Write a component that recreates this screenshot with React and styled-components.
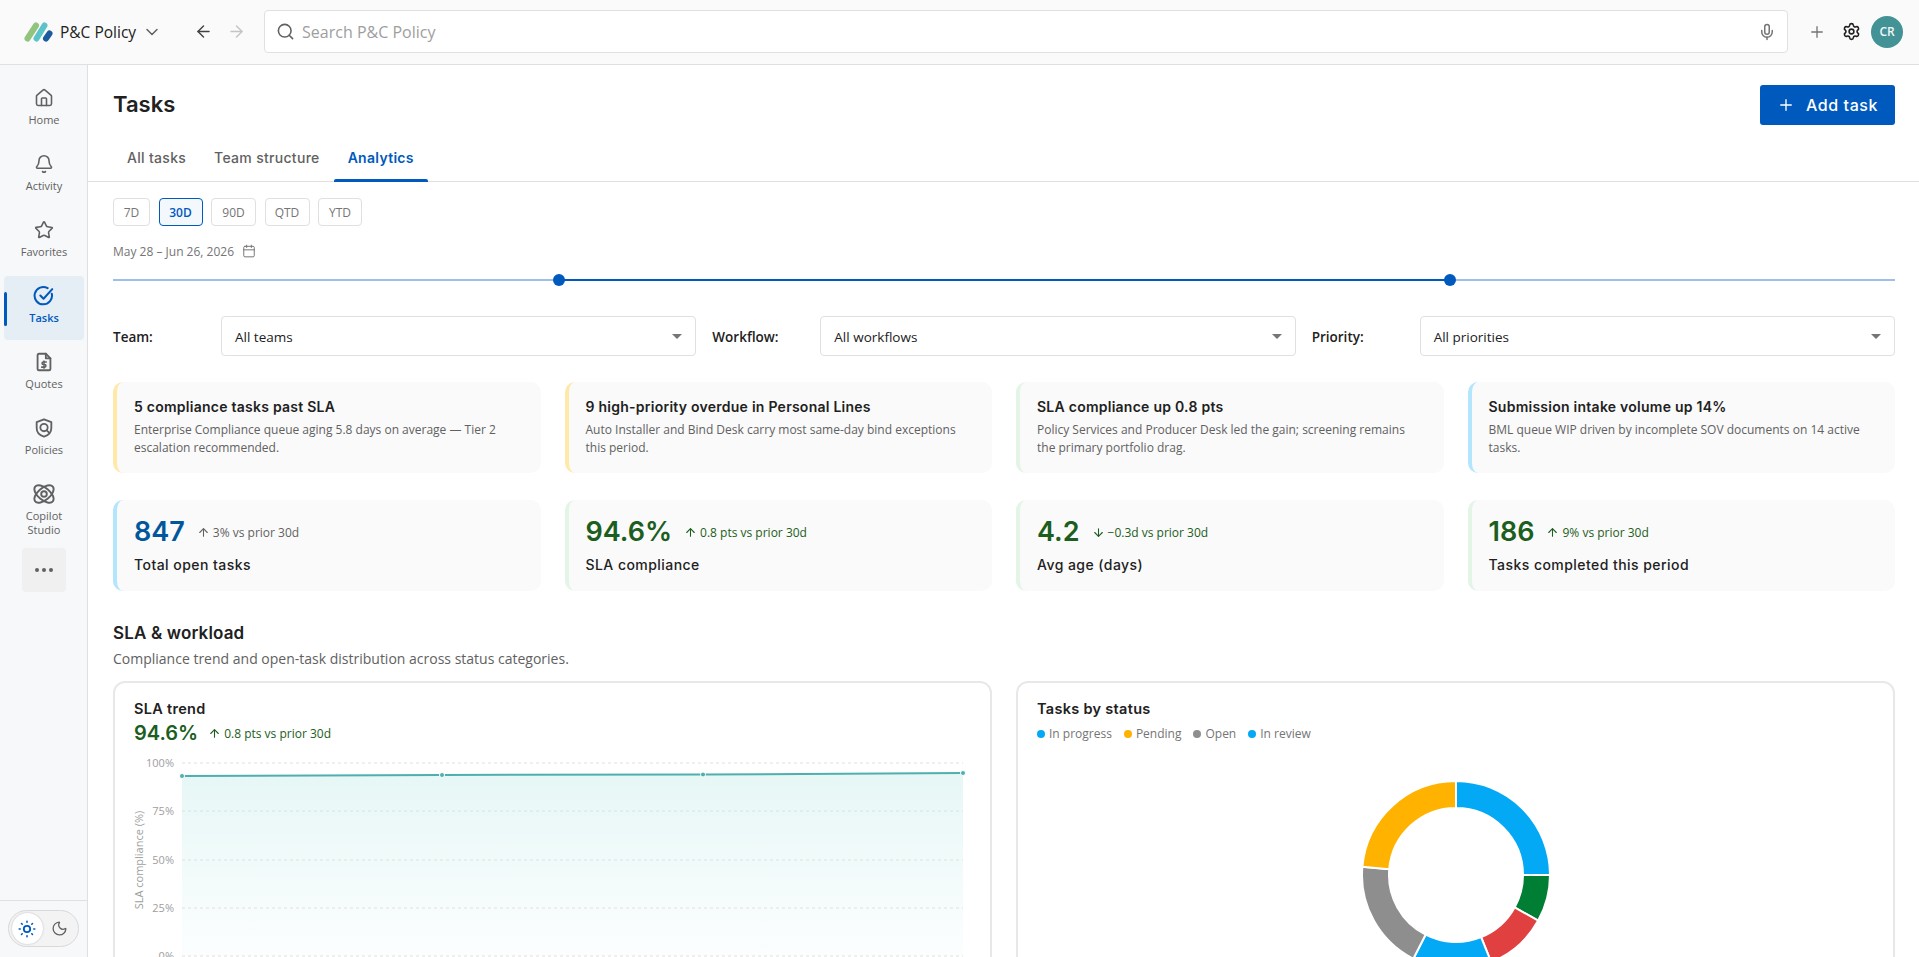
import React from 'react'
import styled, { createGlobalStyle } from 'styled-components'
import {
  House,
  Bell,
  Star,
  Search,
  Mic,
  Plus,
  Settings,
  ArrowLeft,
  ArrowRight,
  ArrowUp,
  ArrowDown,
  ChevronDown,
  Calendar,
  Moon,
} from 'lucide-react'

const headFont = `Inter, 'Liberation Sans', sans-serif`
const bodyFont = `'Open Sans', 'Noto Sans', sans-serif`
const primary = '#0059bd'
const lineColor = '#e0e0e0'
const greenText = '#1b5e20'

const GlobalStyle = createGlobalStyle`
  html, body { margin: 0; padding: 0; height: 100%; overflow: hidden; background: #fff; }
  body { font-family: ${bodyFont}; color: #212121; }
  * { box-sizing: border-box; }
`

const Shell = styled.div`
  height: 957px;
  display: flex;
  flex-direction: column;
  overflow: hidden;
`

const TopBar = styled.header`
  flex: 0 0 65px;
  display: flex;
  align-items: center;
  padding: 0 15px 1px 24px;
  background: #fafafa;
  border-bottom: 1px solid ${lineColor};
`

const AppName = styled.span`
  font-size: 15.5px;
  font-weight: 500;
  margin-left: 7px;
  color: #212121;
  white-space: nowrap;
`

const AppChevron = styled.span`
  display: flex;
  margin-left: 6px;
  color: #616161;
`

const NavArrow = styled.span`
  display: flex;
  margin-left: ${(p) => p.$gap}px;
  color: ${(p) => (p.$disabled ? '#c4c4c4' : '#424242')};
`

const SearchBox = styled.div`
  width: 1524px;
  height: 43px;
  margin-left: 18px;
  padding: 0 11px 0 11px;
  display: flex;
  align-items: center;
  background: #fff;
  border: 1px solid ${lineColor};
  border-radius: 4px;
  color: #616161;
`

const SearchText = styled.span`
  flex: 1;
  margin-left: 7px;
  font-size: 16px;
  color: #9e9e9e;
`

const TopAction = styled.span`
  display: flex;
  margin-left: ${(p) => p.$gap}px;
  color: ${(p) => p.$color};
`

const Avatar = styled.span`
  width: 32px;
  height: 32px;
  margin-left: 10px;
  display: flex;
  align-items: center;
  justify-content: center;
  border-radius: 50%;
  background: #429296;
  color: #f1f8f8;
  font-size: 12px;
  font-weight: 600;
`

const Body = styled.div`
  flex: 1;
  min-height: 0;
  display: flex;
`

const SideBar = styled.nav`
  flex: 0 0 88px;
  display: flex;
  flex-direction: column;
  background: #f7f8fa;
  border-right: 1px solid ${lineColor};
`

const NavList = styled.div`
  flex: 1;
  padding: 13px 3px 0 4px;
  display: flex;
  flex-direction: column;
  align-items: center;
  gap: 2px;
`

const NavItem = styled.a`
  position: relative;
  flex: 0 0 64px;
  width: 100%;
  padding-top: 9px;
  display: flex;
  flex-direction: column;
  align-items: center;
  gap: 4px;
  border-radius: 4px;
  font-size: 11px;
  line-height: 14px;
  text-align: center;
  color: ${(p) => (p.$active ? primary : '#616161')};
  font-weight: ${(p) => (p.$active ? 600 : 400)};
  background: ${(p) => (p.$active ? '#e5edf5' : 'transparent')};
`

const NavIcon = styled.span`
  height: 22px;
  display: flex;
  align-items: center;
  justify-content: center;
`

const NavLabel = styled.span`
  max-width: 60px;
`

const ActiveMark = styled.span`
  position: absolute;
  left: 0;
  top: 16px;
  width: 3px;
  height: 34px;
  border-radius: 2px;
  background: ${primary};
`

const MoreTile = styled.div`
  flex: 0 0 44px;
  width: 44px;
  margin-top: 8px;
  display: flex;
  align-items: center;
  justify-content: center;
  gap: 2.5px;
  border-radius: 4px;
  background: #f0f0f0;
`

const MoreDot = styled.span`
  width: 4.5px;
  height: 4.5px;
  border-radius: 50%;
  background: #616161;
`

const ThemeArea = styled.div`
  flex: 0 0 57px;
  padding: 9px 8px;
  border-top: 1px solid ${lineColor};
`

const ThemeToggle = styled.div`
  width: 71px;
  height: 37px;
  padding: 2px 3px;
  display: flex;
  align-items: center;
  border: 1px solid #d9d9d9;
  border-radius: 19px;
  background: #f3f3f3;
  color: #616161;
`

const ThemeKnob = styled.span`
  width: 31px;
  height: 31px;
  display: flex;
  align-items: center;
  justify-content: center;
  border-radius: 50%;
  background: ${(p) => (p.$on ? '#fff' : 'transparent')};
  box-shadow: ${(p) => (p.$on ? '0 0 2px rgba(0,0,0,.25)' : 'none')};
  margin-right: ${(p) => (p.$on ? '2px' : '0')};
`

const Main = styled.main`
  flex: 1;
  min-width: 0;
  overflow: hidden;
`

const TitleRow = styled.div`
  height: 60px;
  padding: 20px 24px 0 25px;
  display: flex;
  justify-content: space-between;
  align-items: flex-start;
`

const PageTitle = styled.h1`
  margin: 0;
  font-family: ${headFont};
  font-size: 22px;
  line-height: 38px;
  font-weight: 600;
  color: #212121;
`

const AddButton = styled.button`
  width: 135px;
  height: 40px;
  display: flex;
  align-items: center;
  justify-content: center;
  gap: 11px;
  border: 0;
  border-radius: 3px;
  background: ${primary};
  color: #fff;
  font-family: ${headFont};
  font-size: 16px;
  letter-spacing: 0.6px;
  font-weight: 500;
`

const Tabs = styled.div`
  height: 57px;
  padding: 0 0 0 25px;
  display: flex;
  align-items: stretch;
  border-bottom: 1px solid ${lineColor};
`

const Tab = styled.div`
  position: relative;
  padding: 8px 14px 0;
  display: flex;
  align-items: center;
  font-family: ${headFont};
  font-size: 14px;
  letter-spacing: 0.3px;
  font-weight: ${(p) => (p.$active ? 600 : 500)};
  color: ${(p) => (p.$active ? primary : '#616161')};
`

const TabLine = styled.span`
  position: absolute;
  left: 0;
  right: 0;
  bottom: -1px;
  height: 3px;
  border-radius: 2px 2px 0 0;
  background: ${primary};
`

const Content = styled.div`
  padding: 16px 24px 0 25px;
`

const Chips = styled.div`
  display: flex;
  gap: 8.5px;
`

const Chip = styled.span`
  height: 28px;
  width: ${(p) => p.$w}px;
  display: flex;
  align-items: center;
  justify-content: center;
  font-size: 12px;
  border-radius: 4px;
  border: 1px solid ${(p) => (p.$active ? primary : lineColor)};
  background: ${(p) => (p.$active ? '#f3f8fd' : '#fff')};
  color: ${(p) => (p.$active ? primary : '#757575')};
  font-weight: ${(p) => (p.$active ? 600 : 400)};
`

const DateRow = styled.div`
  margin-top: 16px;
  height: 18px;
  display: flex;
  align-items: center;
  gap: 8px;
  font-size: 12px;
  color: #757575;
`

const Slider = styled.div`
  position: relative;
  height: 2px;
  margin-top: 19px;
  background: #9dc0ea;
`

const SliderFill = styled.span`
  position: absolute;
  top: 0;
  height: 2px;
  background: ${primary};
`

const SliderThumb = styled.span`
  position: absolute;
  top: -5px;
  width: 12px;
  height: 12px;
  margin-left: -6px;
  border-radius: 50%;
  background: ${primary};
`

const Filters = styled.div`
  margin-top: 35px;
  display: flex;
  gap: 16px;
`

const FilterGroup = styled.div`
  flex: 1;
  display: flex;
  align-items: center;
`

const FilterLabel = styled.span`
  flex: 0 0 108px;
  padding-top: 1px;
  font-size: 13.5px;
  font-weight: 600;
  color: #212121;
`

const Select = styled.div`
  flex: 1;
  height: 40px;
  padding: 1px 13px 0;
  display: flex;
  align-items: center;
  justify-content: space-between;
  border: 1px solid ${lineColor};
  border-radius: 4px;
  font-size: 13.5px;
  color: #212121;
`

const Caret = styled.span`
  width: 0;
  height: 0;
  border-left: 5px solid transparent;
  border-right: 5px solid transparent;
  border-top: 5px solid #757575;
`

const CardGrid = styled.div`
  margin-top: ${(p) => p.$top}px;
  display: grid;
  grid-template-columns: repeat(4, minmax(0, 1fr));
  gap: 24px;
`

const InfoCard = styled.div`
  height: 91px;
  padding: 14px 24px 0 17px;
  background: #fafafa;
  border-left: 4px solid ${(p) => p.$accent};
  border-radius: 10px;
`

const InfoTitle = styled.div`
  font-family: ${headFont};
  font-size: 14px;
  letter-spacing: 0.25px;
  line-height: 22px;
  font-weight: 600;
  color: #212121;
`

const InfoText = styled.div`
  margin-top: 3px;
  font-size: 12px;
  line-height: 18px;
  color: #616161;
`

const KpiTop = styled.div`
  margin-top: 1px;
  display: flex;
  align-items: center;
  gap: 12px;
`

const KpiValue = styled.span`
  font-family: ${headFont};
  font-size: 27px;
  line-height: 34px;
  font-weight: 600;
  color: ${(p) => p.$color};
`

const Delta = styled.span`
  display: flex;
  align-items: center;
  gap: 3px;
  font-size: 12px;
  color: ${(p) => p.$color};
`

const KpiLabel = styled.div`
  margin-top: 6px;
  font-family: ${headFont};
  font-size: 14px;
  letter-spacing: 0.45px;
  line-height: 20px;
  font-weight: 500;
  color: #212121;
`

const SectionTitle = styled.h2`
  margin: 29px 0 0;
  font-family: ${headFont};
  font-size: 17px;
  letter-spacing: 0.15px;
  line-height: 26px;
  font-weight: 600;
  color: #212121;
`

const SectionSub = styled.p`
  margin: 3px 0 0;
  font-size: 14px;
  line-height: 20px;
  color: #616161;
`

const Panels = styled.div`
  margin-top: 12px;
  display: grid;
  grid-template-columns: repeat(2, minmax(0, 1fr));
  gap: 24px;
`

const Panel = styled.section`
  height: 400px;
  padding: 16px 19px;
  border: 2px solid #e8e8e8;
  border-radius: 12px;
`

const PanelTitle = styled.div`
  font-family: ${headFont};
  font-size: 14.5px;
  letter-spacing: 0.3px;
  line-height: 20px;
  font-weight: 600;
  color: #212121;
`

const TrendTop = styled.div`
  display: flex;
  align-items: center;
  gap: 10px;
`

const TrendValue = styled.span`
  font-family: ${headFont};
  font-size: 20px;
  line-height: 28px;
  font-weight: 600;
  color: ${greenText};
`

const Legend = styled.div`
  margin-top: 7px;
  display: flex;
  gap: 12px;
`

const LegendItem = styled.span`
  display: flex;
  align-items: center;
  gap: 4px;
  font-size: 12px;
  line-height: 16px;
  color: #757575;
`

const LegendDot = styled.span`
  width: 8px;
  height: 8px;
  border-radius: 50%;
  background: ${(p) => p.$color};
`

const ChartSvg = styled.svg`
  display: block;
  margin: 9px 0 0 4px;
  overflow: visible;
`

const DonutSvg = styled.svg`
  display: block;
  margin: 33px auto 0;
`

const AxisText = styled.text`
  font-family: ${bodyFont};
  font-size: 11px;
  fill: #9e9e9e;
`

function LogoMark() {
  return (
    <svg width="29" height="20" viewBox="0 0 29 20">
      <line x1="3.5" y1="16.5" x2="12" y2="3.5" stroke="#93c47d" strokeWidth="6" strokeLinecap="round" />
      <line x1="12.5" y1="16.5" x2="20.5" y2="3.5" stroke="#5cc4c9" strokeWidth="6" strokeLinecap="round" />
      <line x1="22" y1="16.5" x2="25.5" y2="11.5" stroke="#1c5c9e" strokeWidth="6" strokeLinecap="round" />
    </svg>
  )
}

function TaskIcon() {
  return (
    <svg width="22" height="22" viewBox="0 0 24 24" fill="none" stroke="currentColor" strokeWidth="2.2" strokeLinecap="round" strokeLinejoin="round">
      <path d="M20.5 9.5A9.5 9.5 0 1 1 16 3.4" />
      <path d="M8 11.5l3.5 3.5L21 4.5" />
    </svg>
  )
}

function QuoteIcon() {
  return (
    <svg width="22" height="22" viewBox="0 0 24 24" fill="none" stroke="currentColor" strokeWidth="2" strokeLinecap="round" strokeLinejoin="round">
      <path d="M14 3H6.5A1.5 1.5 0 0 0 5 4.5v15A1.5 1.5 0 0 0 6.5 21h11a1.5 1.5 0 0 0 1.5-1.5V8z" />
      <path d="M14 3v5h5" />
      <path d="M14.5 12h-3.2a1.4 1.4 0 0 0 0 2.8h1.4a1.4 1.4 0 0 1 0 2.8H9.5" strokeWidth="1.7" />
      <path d="M12 10.8v8" strokeWidth="1.5" />
    </svg>
  )
}

function ShieldIcon() {
  return (
    <svg width="22" height="22" viewBox="0 0 24 24" fill="none" stroke="currentColor" strokeWidth="2" strokeLinecap="round" strokeLinejoin="round">
      <path d="M12 2.500l8 3v6.500c0 4.600-3.300 8-8 9.500-4.700-1.500-8-4.900-8-9.500V5.500z" />
      <circle cx="12" cy="11.500" r="4" />
      <path d="M15 14.500l2.500 2.500" />
    </svg>
  )
}

function OrbitIcon() {
  return (
    <svg width="24" height="24" viewBox="0 0 24 24" fill="none" stroke="currentColor" strokeWidth="1.9">
      <ellipse cx="12" cy="12" rx="11.500" ry="6" transform="rotate(40 12 12)" />
      <ellipse cx="12" cy="12" rx="11.500" ry="6" transform="rotate(-40 12 12)" />
      <circle cx="12" cy="12" r="2.800" />
    </svg>
  )
}

function SunIcon() {
  return (
    <svg width="18" height="18" viewBox="0 0 18 18" fill="none" stroke={primary} strokeWidth="1.600" strokeLinecap="round">
      <circle cx="9" cy="9" r="3.200" strokeWidth="1.800" />
      <path d="M9 1.200v1M9 15.800v1M1.200 9h1M15.800 9h1M3.500 3.500l.7.7M13.800 13.800l.7.7M3.500 14.500l.7-.7M13.800 4.200l.7-.7" />
    </svg>
  )
}

const navItems = [
  { label: 'Home', icon: <House size={20} strokeWidth={1.9} /> },
  { label: 'Activity', icon: <Bell size={20} strokeWidth={1.9} /> },
  { label: 'Favorites', icon: <Star size={20} strokeWidth={1.9} /> },
  { label: 'Tasks', icon: <TaskIcon />, active: true },
  { label: 'Quotes', icon: <QuoteIcon /> },
  { label: 'Policies', icon: <ShieldIcon /> },
  { label: 'Copilot Studio', icon: <OrbitIcon /> },
]

const ranges = [
  { label: '7D', w: 37 },
  { label: '30D', w: 44, active: true },
  { label: '90D', w: 45 },
  { label: 'QTD', w: 45 },
  { label: 'YTD', w: 44 },
]

const filters = [
  { label: 'Team:', value: 'All teams' },
  { label: 'Workflow:', value: 'All workflows' },
  { label: 'Priority:', value: 'All priorities' },
]

const insights = [
  {
    accent: '#ffe9a8',
    title: '5 compliance tasks past SLA',
    text: 'Enterprise Compliance queue aging 5.8 days on average — Tier 2 escalation recommended.',
  },
  {
    accent: '#ffe9a8',
    title: '9 high-priority overdue in Personal Lines',
    text: 'Auto Installer and Bind Desk carry most same-day bind exceptions this period.',
  },
  {
    accent: '#e3f5e6',
    title: 'SLA compliance up 0.8 pts',
    text: 'Policy Services and Producer Desk led the gain; screening remains the primary portfolio drag.',
  },
  {
    accent: '#b3e5fc',
    title: 'Submission intake volume up 14%',
    text: 'BML queue WIP driven by incomplete SOV documents on 14 active tasks.',
  },
]

const kpis = [
  { accent: '#b3e5fc', value: '847', color: '#01579b', up: true, delta: '3% vs prior 30d', deltaColor: '#616161', label: 'Total open tasks' },
  { accent: '#e3f5e6', value: '94.6%', color: greenText, up: true, delta: '0.8 pts vs prior 30d', deltaColor: greenText, label: 'SLA compliance' },
  { accent: '#e3f5e6', value: '4.2', color: greenText, up: false, delta: '−0.3d vs prior 30d', deltaColor: greenText, label: 'Avg age (days)' },
  { accent: '#e3f5e6', value: '186', color: greenText, up: true, delta: '9% vs prior 30d', deltaColor: greenText, label: 'Tasks completed this period' },
]

const legend = [
  { label: 'In progress', color: '#03a9f4' },
  { label: 'Pending', color: '#ffb300' },
  { label: 'Open', color: '#8e8e8e' },
  { label: 'In review', color: '#03a9f4' },
]

const donutSlices = [
  { from: 0, to: 90, color: '#03a9f4' },
  { from: 90, to: 119, color: '#007e33' },
  { from: 119, to: 158, color: '#e04040' },
  { from: 158, to: 207, color: '#03a9f4' },
  { from: 207, to: 275, color: '#8e8e8e' },
  { from: 275, to: 360, color: '#ffb300' },
]

const trendPoints = [
  [44, 20],
  [304, 19],
  [565, 18.5],
  [825, 17],
]

const gridLines = [
  { y: 7, label: '100%' },
  { y: 55, label: '75%' },
  { y: 104, label: '50%' },
  { y: 152, label: '25%' },
  { y: 200, label: '0%' },
]

function polar(r, deg) {
  const a = ((deg - 90) * Math.PI) / 180
  return [100 + r * Math.cos(a), 100 + r * Math.sin(a)]
}

function slicePath(from, to) {
  const large = to - from > 180 ? 1 : 0
  const [ax, ay] = polar(94, from)
  const [bx, by] = polar(94, to)
  const [cx, cy] = polar(67, to)
  const [dx, dy] = polar(67, from)
  return `M${ax} ${ay}A94 94 0 ${large} 1 ${bx} ${by}L${cx} ${cy}A67 67 0 ${large} 0 ${dx} ${dy}Z`
}

function TrendChart() {
  const line = trendPoints.map((p) => p.join(',')).join(' ')
  return (
    <ChartSvg width="834" height="220" viewBox="0 0 834 220">
      <defs>
        <linearGradient id="trendFill" x1="0" y1="0" x2="0" y2="1">
          <stop offset="0" stopColor="#e6f7f6" />
          <stop offset="1" stopColor="#fcfefe" />
        </linearGradient>
      </defs>
      <polygon points={`44,200 ${line} 825,200`} fill="url(#trendFill)" />
      {gridLines.map((g) => (
        <g key={g.label}>
          <line x1="44" x2="825" y1={g.y} y2={g.y} stroke="#e0e0e0" strokeDasharray="3 3" />
          <AxisText x="36" y={g.y + 4} textAnchor="end">
            {g.label}
          </AxisText>
        </g>
      ))}
      <AxisText transform="rotate(-90 5 104)" x="5" y="104" textAnchor="middle">
        SLA compliance (%)
      </AxisText>
      <polyline points={line} fill="none" stroke="#4db0ae" strokeWidth="2" />
      {trendPoints.map(([x, y]) => (
        <circle key={x} cx={x} cy={y} r="2.500" fill="#4db0ae" stroke="#fff" strokeWidth="1" />
      ))}
    </ChartSvg>
  )
}

function StatusDonut() {
  return (
    <DonutSvg width="200" height="200" viewBox="0 0 200 200">
      {donutSlices.map((s) => (
        <path key={s.from} d={slicePath(s.from, s.to)} fill={s.color} stroke="#fff" strokeWidth="2" />
      ))}
    </DonutSvg>
  )
}

export default function App() {
  return (
    <Shell>
      <GlobalStyle />
      <TopBar>
        <LogoMark />
        <AppName>P&amp;C Policy</AppName>
        <AppChevron>
          <ChevronDown size={20} strokeWidth={1.8} />
        </AppChevron>
        <NavArrow $gap={32}>
          <ArrowLeft size={19} strokeWidth={1.8} />
        </NavArrow>
        <NavArrow $gap={14} $disabled>
          <ArrowRight size={19} strokeWidth={1.8} />
        </NavArrow>
        <SearchBox>
          <Search size={19} strokeWidth={2} />
          <SearchText>Search P&amp;C Policy</SearchText>
          <Mic size={18} strokeWidth={2} color="#757575" />
        </SearchBox>
        <TopAction $gap={20} $color="#757575">
          <Plus size={18} strokeWidth={1.8} />
        </TopAction>
        <TopAction $gap={16} $color="#212121">
          <Settings size={19} strokeWidth={2} />
        </TopAction>
        <Avatar>CR</Avatar>
      </TopBar>
      <Body>
        <SideBar>
          <NavList>
            {navItems.map((item) => (
              <NavItem key={item.label} $active={item.active}>
                {item.active && <ActiveMark />}
                <NavIcon>{item.icon}</NavIcon>
                <NavLabel>{item.label}</NavLabel>
              </NavItem>
            ))}
            <MoreTile>
              <MoreDot />
              <MoreDot />
              <MoreDot />
            </MoreTile>
          </NavList>
          <ThemeArea>
            <ThemeToggle>
              <ThemeKnob $on>
                <SunIcon />
              </ThemeKnob>
              <ThemeKnob>
                <Moon size={17} strokeWidth={1.8} />
              </ThemeKnob>
            </ThemeToggle>
          </ThemeArea>
        </SideBar>
        <Main>
          <TitleRow>
            <PageTitle>Tasks</PageTitle>
            <AddButton>
              <Plus size={18} strokeWidth={1.8} />
              Add task
            </AddButton>
          </TitleRow>
          <Tabs>
            <Tab>All tasks</Tab>
            <Tab>Team structure</Tab>
            <Tab $active>
              Analytics
              <TabLine />
            </Tab>
          </Tabs>
          <Content>
            <Chips>
              {ranges.map((r) => (
                <Chip key={r.label} $w={r.w} $active={r.active}>
                  {r.label}
                </Chip>
              ))}
            </Chips>
            <DateRow>
              May 28 – Jun 26, 2026
              <Calendar size={14} strokeWidth={1.7} />
            </DateRow>
            <Slider>
              <SliderFill style={{ left: '25%', width: '50%' }} />
              <SliderThumb style={{ left: '25%' }} />
              <SliderThumb style={{ left: '75%' }} />
            </Slider>
            <Filters>
              {filters.map((f) => (
                <FilterGroup key={f.label}>
                  <FilterLabel>{f.label}</FilterLabel>
                  <Select>
                    {f.value}
                    <Caret />
                  </Select>
                </FilterGroup>
              ))}
            </Filters>
            <CardGrid $top={26}>
              {insights.map((c) => (
                <InfoCard key={c.title} $accent={c.accent}>
                  <InfoTitle>{c.title}</InfoTitle>
                  <InfoText>{c.text}</InfoText>
                </InfoCard>
              ))}
            </CardGrid>
            <CardGrid $top={27}>
              {kpis.map((k) => (
                <InfoCard key={k.label} $accent={k.accent}>
                  <KpiTop>
                    <KpiValue $color={k.color}>{k.value}</KpiValue>
                    <Delta $color={k.deltaColor}>
                      {k.up ? <ArrowUp size={13} /> : <ArrowDown size={13} />}
                      {k.delta}
                    </Delta>
                  </KpiTop>
                  <KpiLabel>{k.label}</KpiLabel>
                </InfoCard>
              ))}
            </CardGrid>
            <SectionTitle>SLA &amp; workload</SectionTitle>
            <SectionSub>Compliance trend and open-task distribution across status categories.</SectionSub>
            <Panels>
              <Panel>
                <PanelTitle>SLA trend</PanelTitle>
                <TrendTop>
                  <TrendValue>94.6%</TrendValue>
                  <Delta $color={greenText}>
                    <ArrowUp size={13} />
                    0.8 pts vs prior 30d
                  </Delta>
                </TrendTop>
                <TrendChart />
              </Panel>
              <Panel>
                <PanelTitle>Tasks by status</PanelTitle>
                <Legend>
                  {legend.map((l) => (
                    <LegendItem key={l.label}>
                      <LegendDot $color={l.color} />
                      {l.label}
                    </LegendItem>
                  ))}
                </Legend>
                <StatusDonut />
              </Panel>
            </Panels>
          </Content>
        </Main>
      </Body>
    </Shell>
  )
}
